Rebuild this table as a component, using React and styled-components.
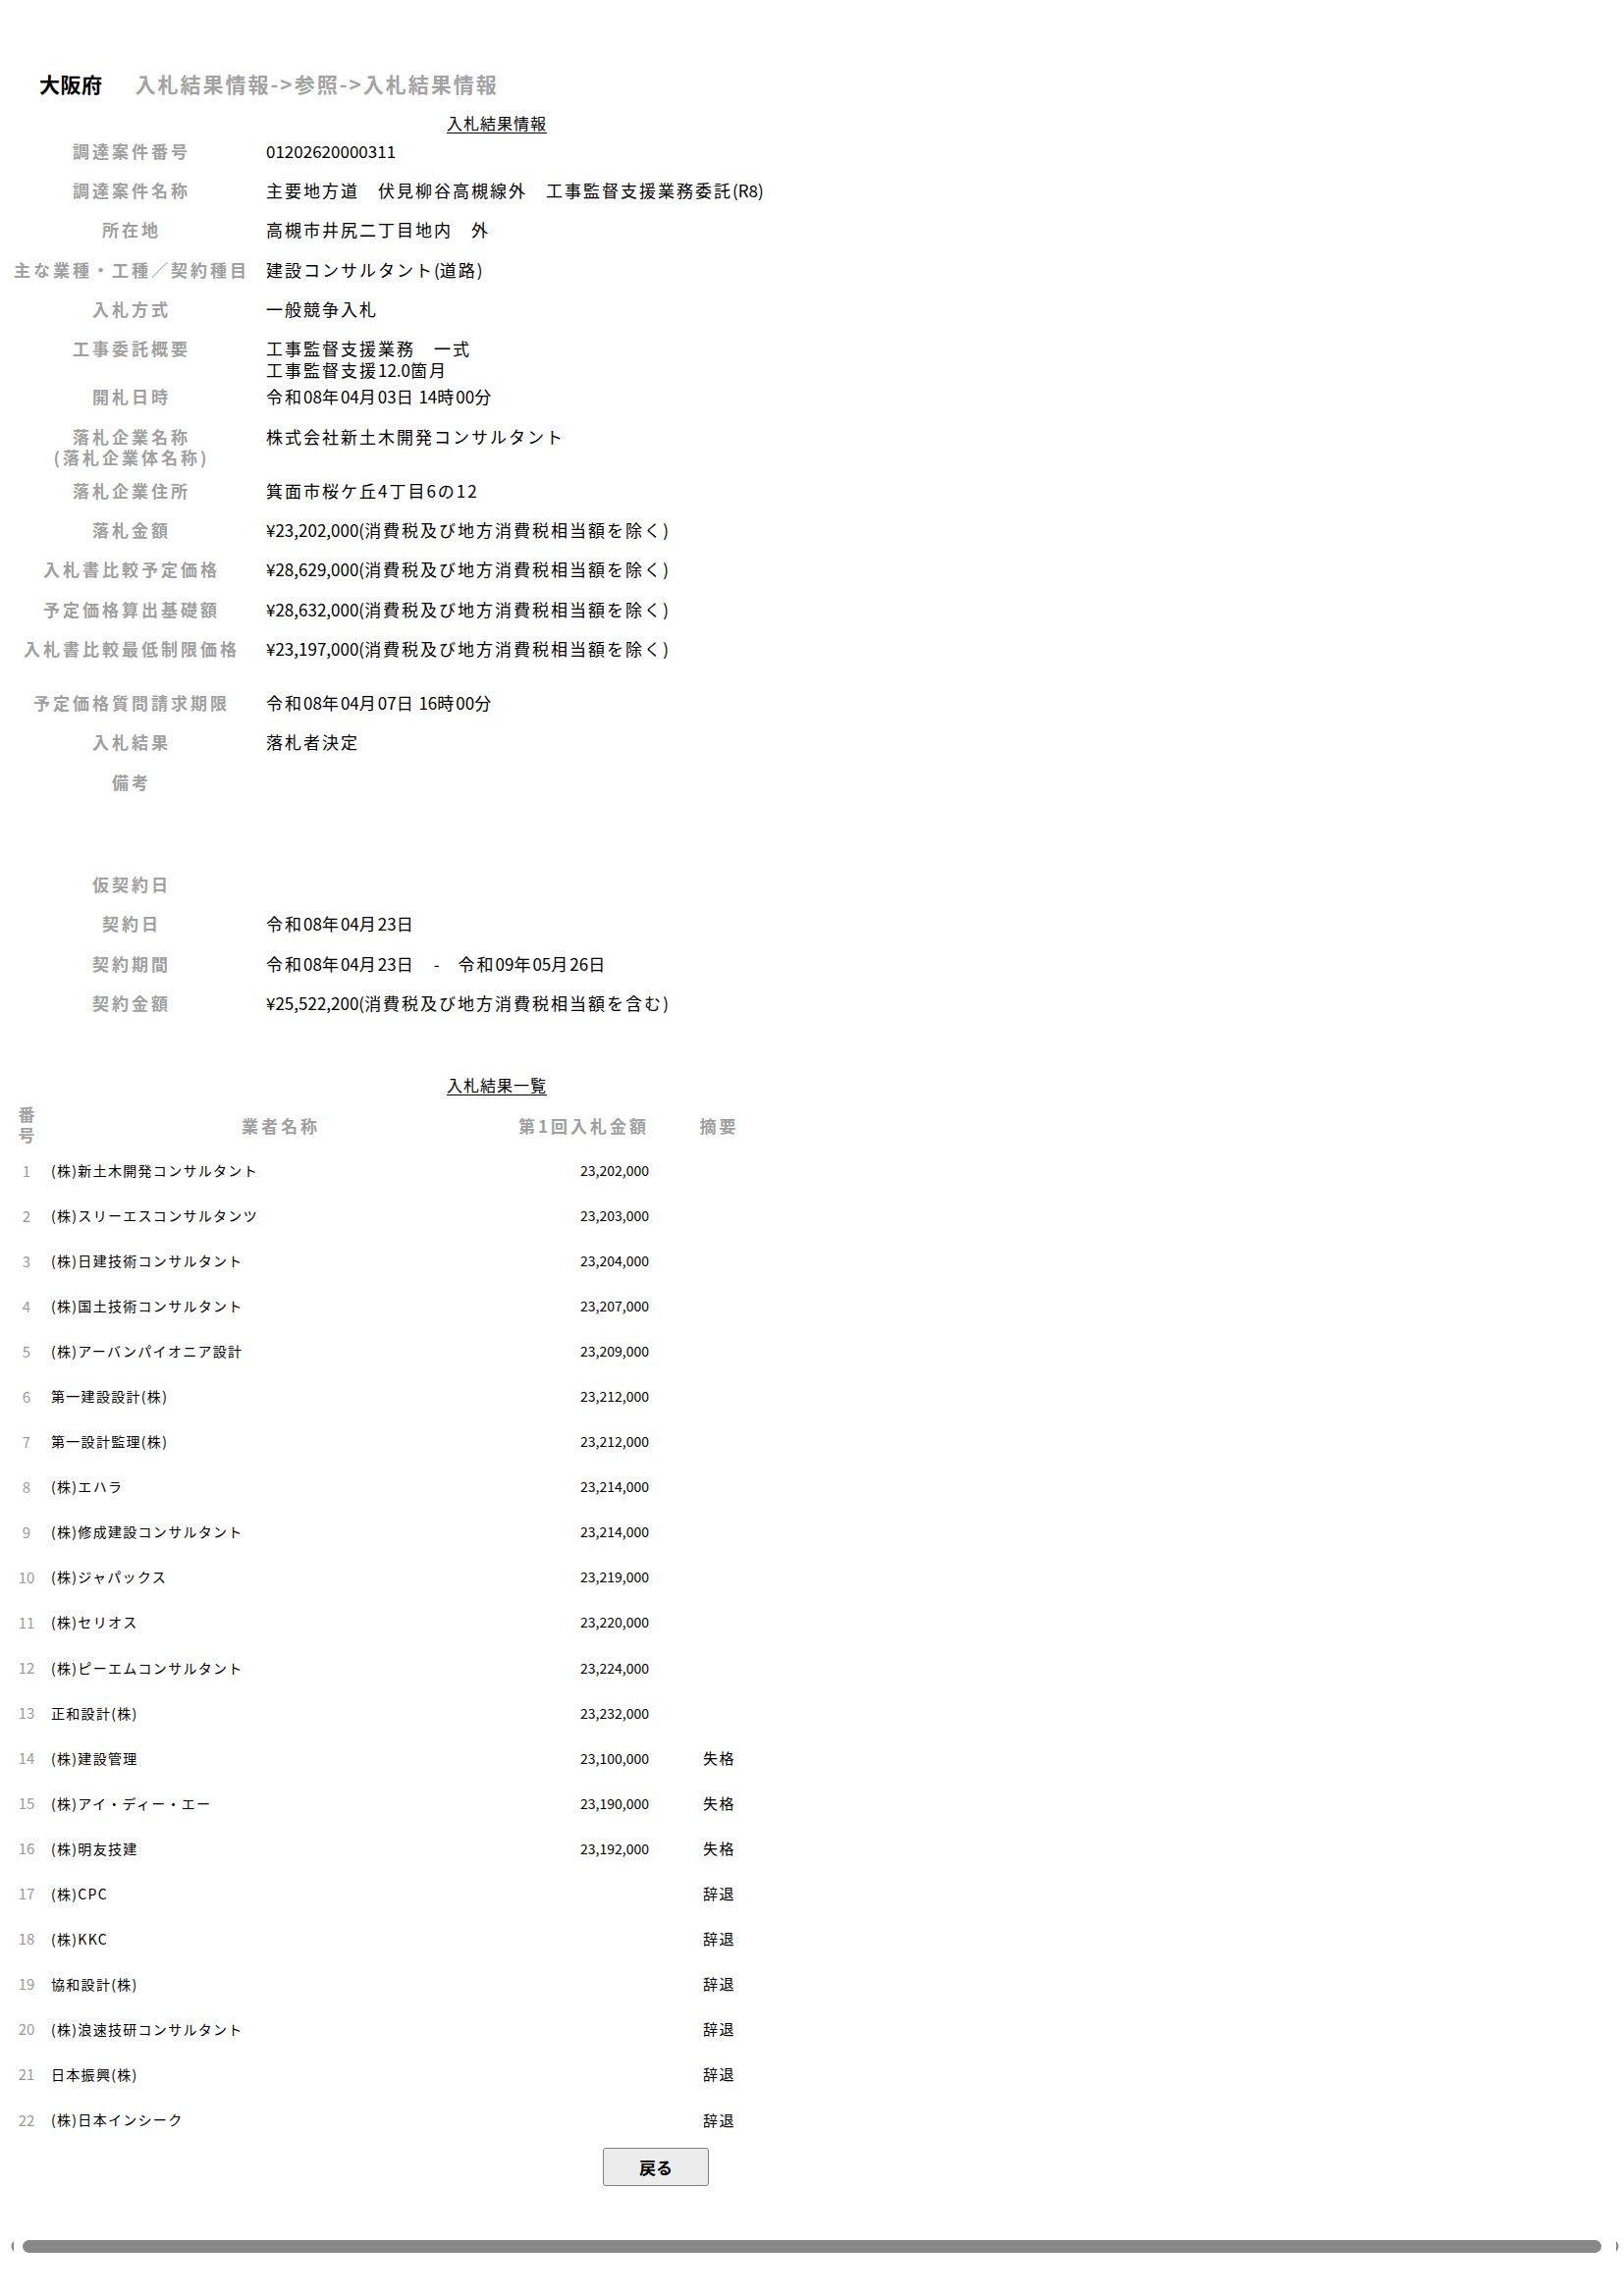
import React from 'react';
import styled, { createGlobalStyle } from 'styled-components';

const FONT = `"Noto Sans CJK JP", "Noto Sans", sans-serif`;

const GlobalStyle = createGlobalStyle`
  html, body {
    margin: 0;
    padding: 0;
    background: #fff;
  }
  body {
    font-family: ${FONT};
    color: #000;
  }
`;

const Page = styled.div`
  width: 1653px;
  min-height: 2339px;
  padding-top: 70px;
  box-sizing: border-box;
`;

const Header = styled.div`
  display: flex;
  align-items: center;
  gap: 33px;
  height: 30px;
  padding-left: 40px;
`;

const Pref = styled.span`
  font-size: 21px;
  font-weight: 700;
  line-height: 30px;
  letter-spacing: 0.5px;
  color: #000;
`;

const Crumb = styled.span`
  font-size: 21px;
  font-weight: 700;
  line-height: 30px;
  letter-spacing: 2px;
  color: #a3a3a3;
`;

const SectionTitle = styled.div`
  width: 992px;
  margin: ${p => p.$mt}px 0 0 10px;
  text-align: center;
  font-size: 16px;
  line-height: 22px;
  letter-spacing: 1px;

  span {
    text-decoration: underline;
    text-underline-offset: 3px;
  }
`;

const InfoList = styled.div`
  margin-top: 7px;
`;

const InfoRow = styled.div`
  display: grid;
  grid-template-columns: 248px 1fr;
  column-gap: 13px;
  align-items: start;
  height: ${p => p.$h}px;
  padding-left: 10px;
`;

const Label = styled.div`
  text-align: center;
  font-size: 17px;
  font-weight: 700;
  line-height: 21px;
  letter-spacing: 3px;
  color: #a0a0a0;
  white-space: nowrap;
`;

const Value = styled.div`
  font-size: 17px;
  line-height: 22px;
  letter-spacing: 2px;
  white-space: nowrap;
`;

// half-width runs (digits, yen, parens) are set tighter than the kanji
const Latin = styled.span`
  letter-spacing: 0;
`;

const ListHead = styled.div`
  display: grid;
  grid-template-columns: 38px 480px 139px 135px;
  align-items: center;
  height: 45px;
  margin: 8px 0 0 8px;
`;

const HeadCell = styled.div`
  font-size: 17px;
  font-weight: 700;
  line-height: 21px;
  letter-spacing: ${p => (p.$tight ? 0 : 3)}px;
  color: #a0a0a0;
  text-align: ${p => p.$align || 'center'};
  padding-right: ${p => (p.$align === 'right' ? 4 : 0)}px;
  align-self: ${p => (p.$top ? 'start' : 'center')};
`;

const ListRow = styled.div`
  display: grid;
  grid-template-columns: 38px 480px 139px 135px;
  align-items: center;
  height: 46.05px;
  margin-left: 8px;
`;

const Num = styled.div`
  text-align: center;
  font-size: 15px;
  color: #9a9a9a;
`;

const Name = styled.div`
  padding-left: 6px;
  font-size: 14px;
  letter-spacing: 1.3px;
  white-space: nowrap;
`;

const Amount = styled.div`
  text-align: right;
  padding-right: 4px;
  font-size: 14px;
`;

const Note = styled.div`
  text-align: center;
  font-size: 15px;
  letter-spacing: 1.5px;
`;

const ButtonBar = styled.div`
  margin-top: 6px;
  padding-left: 614px;
`;

const BackButton = styled.button`
  width: 108px;
  height: 39px;
  background: #ececec;
  border: 1px solid #808080;
  border-radius: 3px;
  font-family: ${FONT};
  font-size: 17px;
  font-weight: 700;
  color: #000;
  cursor: pointer;
`;

const ScrollBar = styled.div`
  display: flex;
  align-items: center;
  height: 13px;
  margin-top: 55px;
  padding-left: 8px;
`;

const Thumb = styled.div`
  width: 1608px;
  height: 13px;
  margin: 0 14px 0 8px;
  background: #888;
  border-radius: 7px;
`;

const Arrow = ({ dir }) => (
  <svg width="7" height="13" viewBox="0 0 7 13">
    {dir === 'left' ? (
      <path d="M6 1 Q1 6.5 6 12 Z" fill="#888" />
    ) : (
      <path d="M1 1 Q6 6.5 1 12 Z" fill="#888" />
    )}
  </svg>
);

const TAX_EX = '(消費税及び地方消費税相当額を除く)';

const info = [
  { label: '調達案件番号', value: '01202620000311', h: 40 },
  { label: '調達案件名称', value: '主要地方道　伏見柳谷高槻線外　工事監督支援業務委託(R8)', h: 40 },
  { label: '所在地', value: '高槻市井尻二丁目地内　外', h: 41 },
  { label: '主な業種・工種／契約種目', value: '建設コンサルタント(道路)', h: 40 },
  { label: '入札方式', value: '一般競争入札', h: 40 },
  { label: '工事委託概要', value: ['工事監督支援業務　一式', '工事監督支援12.0箇月'], h: 49 },
  { label: '開札日時', value: '令和08年04月03日 14時00分', h: 41 },
  { label: ['落札企業名称', '(落札企業体名称)'], value: '株式会社新土木開発コンサルタント', h: 55 },
  { label: '落札企業住所', value: '箕面市桜ケ丘4丁目6の12', h: 40, plain: true },
  { label: '落札金額', value: '¥23,202,000' + TAX_EX, h: 40 },
  { label: '入札書比較予定価格', value: '¥28,629,000' + TAX_EX, h: 41 },
  { label: '予定価格算出基礎額', value: '¥28,632,000' + TAX_EX, h: 40 },
  { label: '入札書比較最低制限価格', value: '¥23,197,000' + TAX_EX, h: 55 },
  { label: '予定価格質問請求期限', value: '令和08年04月07日 16時00分', h: 40 },
  { label: '入札結果', value: '落札者決定', h: 41 },
  { label: '備考', value: '', h: 104 },
  { label: '仮契約日', value: '', h: 40 },
  { label: '契約日', value: '令和08年04月23日', h: 41 },
  { label: '契約期間', value: '令和08年04月23日　-　令和09年05月26日', h: 40 },
  { label: '契約金額', value: '¥25,522,200(消費税及び地方消費税相当額を含む)', h: 40 },
];

const bids = [
  ['(株)新土木開発コンサルタント', '23,202,000', ''],
  ['(株)スリーエスコンサルタンツ', '23,203,000', ''],
  ['(株)日建技術コンサルタント', '23,204,000', ''],
  ['(株)国土技術コンサルタント', '23,207,000', ''],
  ['(株)アーバンパイオニア設計', '23,209,000', ''],
  ['第一建設設計(株)', '23,212,000', ''],
  ['第一設計監理(株)', '23,212,000', ''],
  ['(株)エハラ', '23,214,000', ''],
  ['(株)修成建設コンサルタント', '23,214,000', ''],
  ['(株)ジャパックス', '23,219,000', ''],
  ['(株)セリオス', '23,220,000', ''],
  ['(株)ピーエムコンサルタント', '23,224,000', ''],
  ['正和設計(株)', '23,232,000', ''],
  ['(株)建設管理', '23,100,000', '失格'],
  ['(株)アイ・ディー・エー', '23,190,000', '失格'],
  ['(株)明友技建', '23,192,000', '失格'],
  ['(株)CPC', '', '辞退'],
  ['(株)KKC', '', '辞退'],
  ['協和設計(株)', '', '辞退'],
  ['(株)浪速技研コンサルタント', '', '辞退'],
  ['日本振興(株)', '', '辞退'],
  ['(株)日本インシーク', '', '辞退'],
];

const mixed = text =>
  text
    .split(/([¥0-9,.()A-Za-z\- ]+)/)
    .map((part, i) => (i % 2 ? <Latin key={i}>{part}</Latin> : part));

const lines = (v, plain) => {
  const render = t => (plain ? t : mixed(t));
  return Array.isArray(v) ? v.map((t, i) => <div key={i}>{render(t)}</div>) : render(v);
};

export default function App() {
  return (
    <>
      <GlobalStyle />
      <Page>
        <Header>
          <Pref>大阪府</Pref>
          <Crumb>入札結果情報-&gt;参照-&gt;入札結果情報</Crumb>
        </Header>

        <SectionTitle $mt={14}><span>入札結果情報</span></SectionTitle>
        <InfoList>
          {info.map((row, i) => (
            <InfoRow key={i} $h={row.h}>
              <Label>{lines(row.label, true)}</Label>
              <Value>{lines(row.value, row.plain)}</Value>
            </InfoRow>
          ))}
        </InfoList>

        <SectionTitle $mt={43}><span>入札結果一覧</span></SectionTitle>
        <ListHead>
          <HeadCell $top $tight>番<br />号</HeadCell>
          <HeadCell>業者名称</HeadCell>
          <HeadCell $align="right">第1回入札金額</HeadCell>
          <HeadCell>摘要</HeadCell>
        </ListHead>
        {bids.map(([name, amount, note], i) => (
          <ListRow key={i}>
            <Num>{i + 1}</Num>
            <Name>{name}</Name>
            <Amount>{amount}</Amount>
            <Note>{note}</Note>
          </ListRow>
        ))}

        <ButtonBar>
          <BackButton type="button">戻る</BackButton>
        </ButtonBar>

        <ScrollBar>
          <Arrow dir="left" />
          <Thumb />
          <Arrow dir="right" />
        </ScrollBar>
      </Page>
    </>
  );
}
